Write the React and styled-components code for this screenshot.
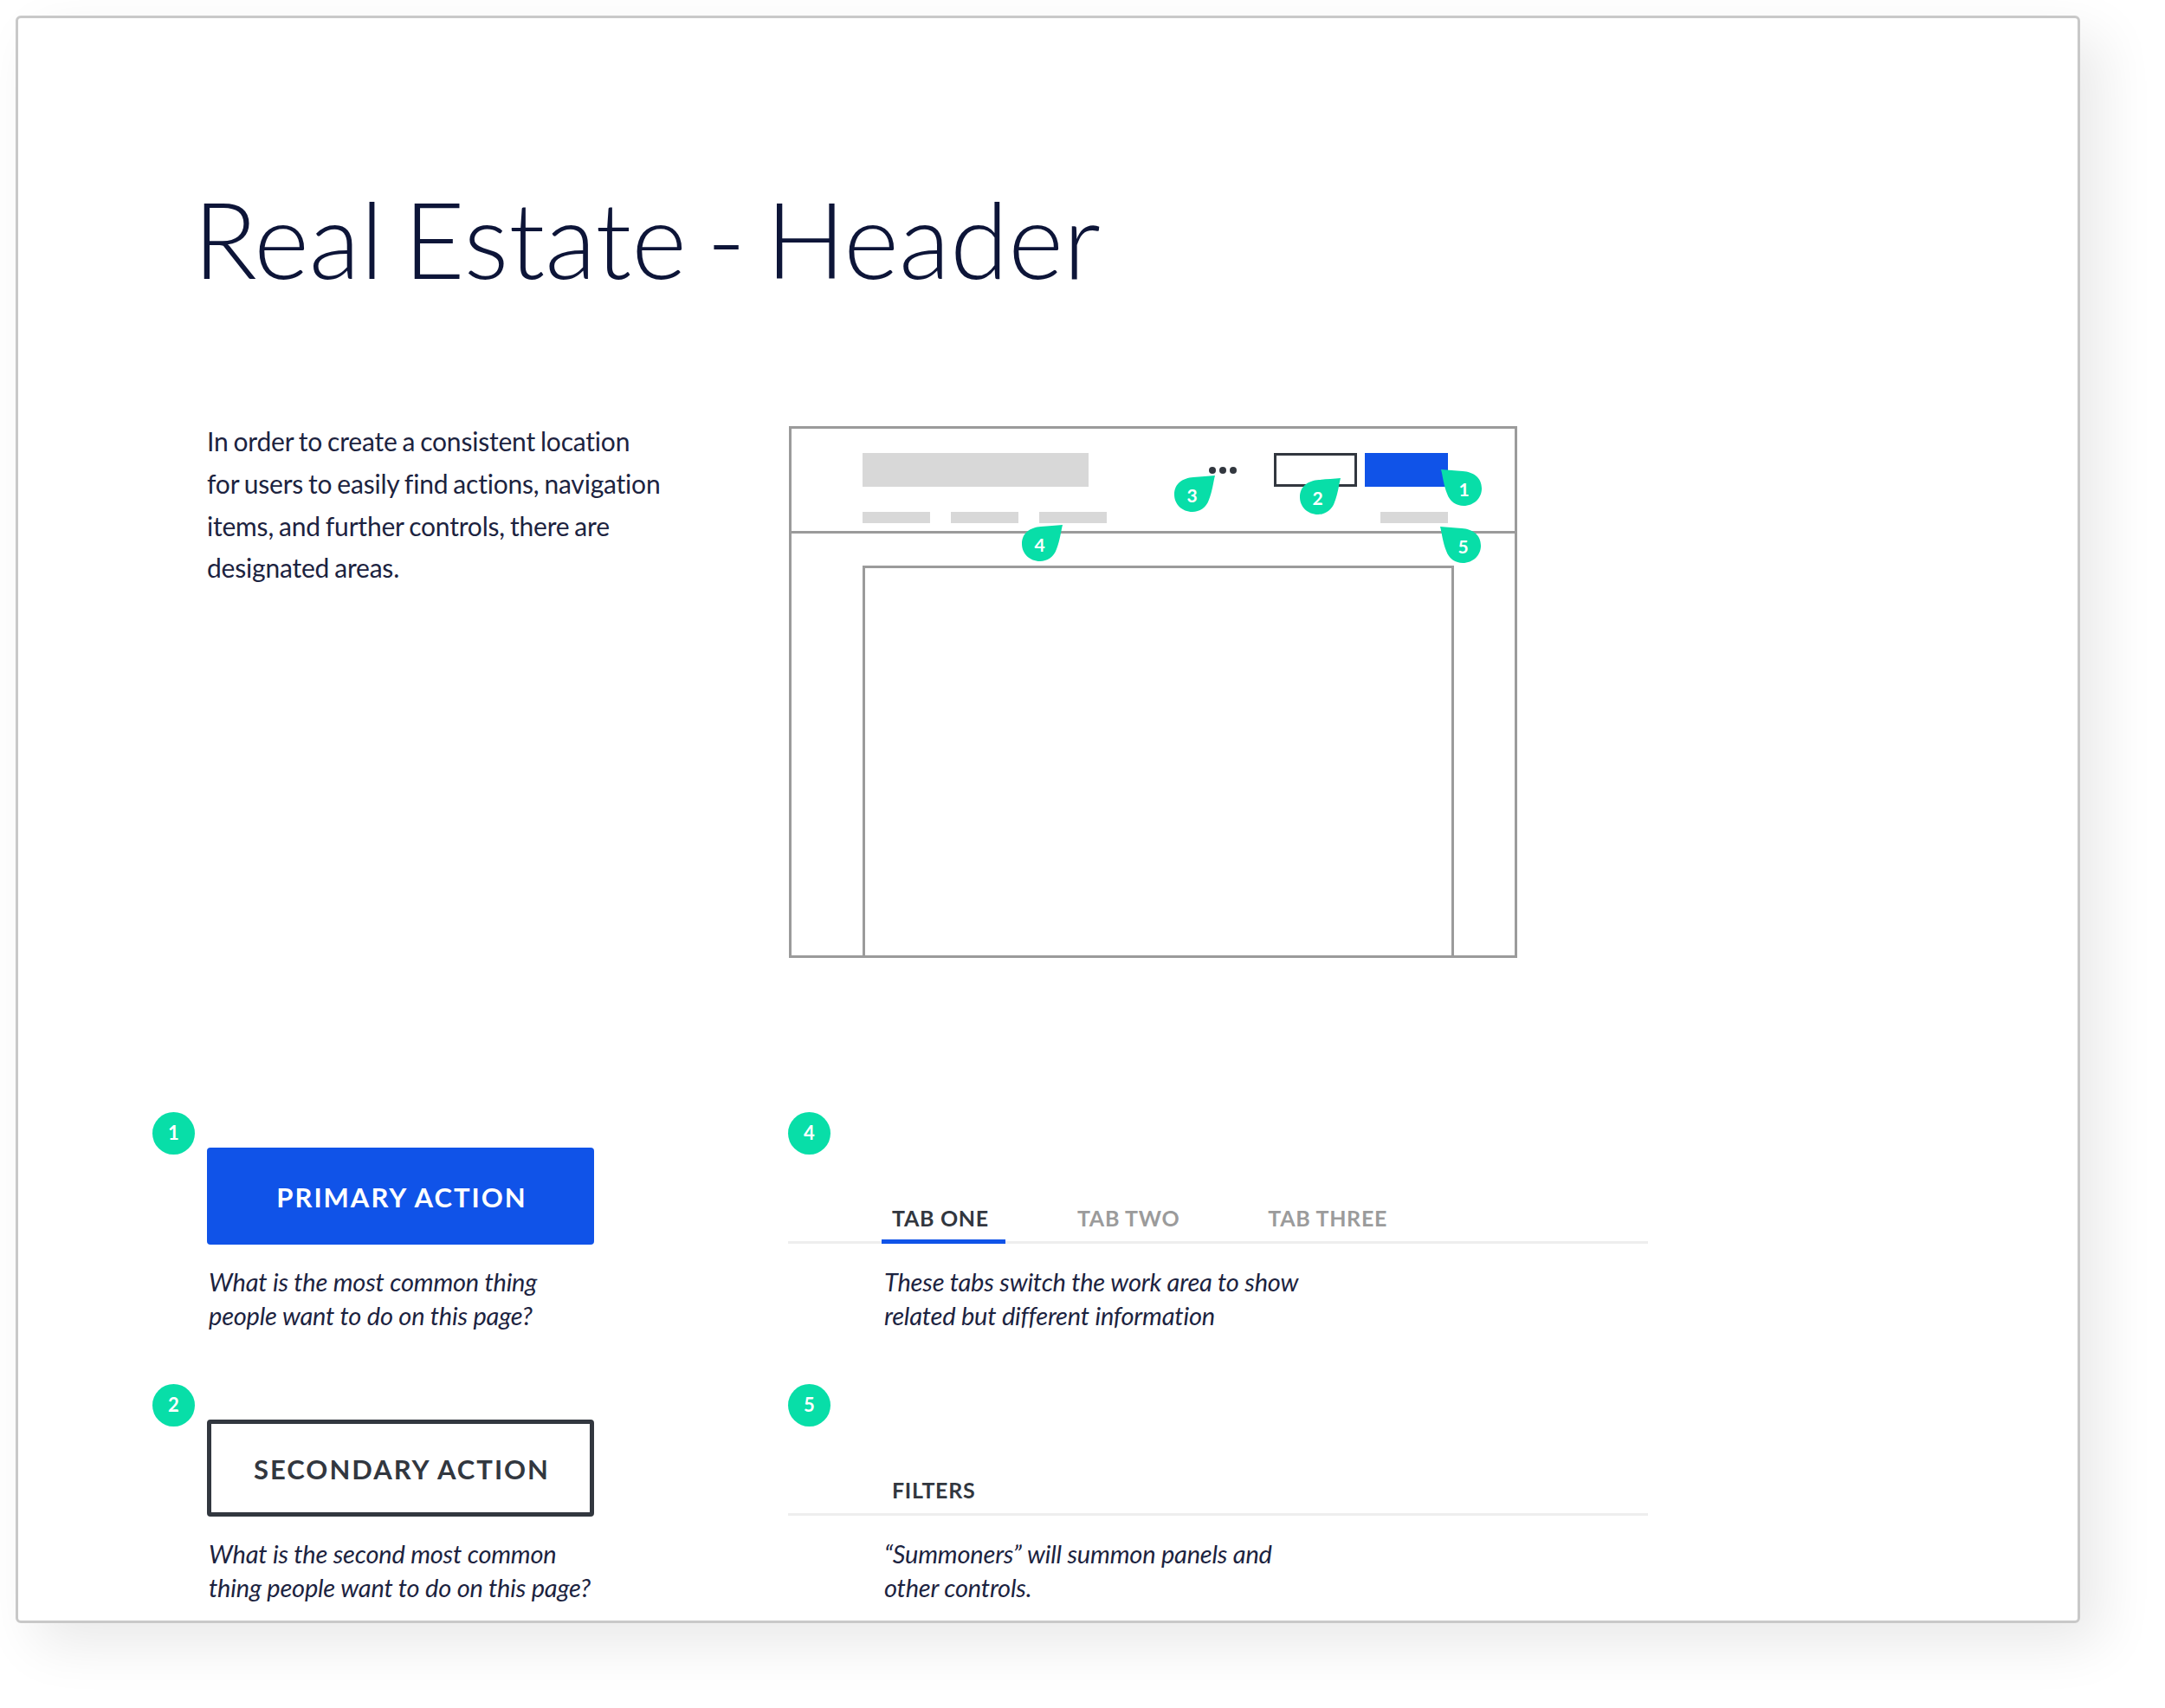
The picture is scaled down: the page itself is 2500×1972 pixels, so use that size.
import React from 'react';
import styled, { createGlobalStyle } from 'styled-components';

const GlobalStyle = createGlobalStyle`
  html, body {
    margin: 0;
    padding: 0;
    background: #fff;
  }
  body {
    font-family: Lato, "Liberation Sans", sans-serif;
    color: #1c2340;
  }
`;

const Page = styled.div`
  width: 2500px;
  height: 1972px;
  padding: 18px 98px 98px 18px;
  box-sizing: border-box;
  overflow: hidden;
`;

const Frame = styled.div`
  height: 100%;
  box-sizing: border-box;
  background: #fff;
  border: 3px solid #c8c8c8;
  border-radius: 6px;
  box-shadow: 24px 24px 64px rgba(0, 0, 0, 0.09);
  overflow: hidden;
`;

const Title = styled.h1`
  margin: 192px 0 0 202px;
  font-size: 122px;
  line-height: 124px;
  font-weight: 300;
  word-spacing: -10px;
  color: #0d1538;
`;

const Intro = styled.div`
  margin-top: 155px;
  padding-left: 218px;
  display: grid;
  grid-template-columns: 672px 841px;
`;

const IntroText = styled.p`
  margin: -7px 0 0;
  font-size: 30px;
  line-height: 48.8px;
  letter-spacing: -0.2px;
  word-spacing: -1.5px;
  color: #1c2340;
`;

const Wire = styled.div`
  position: relative;
  height: 614px;
  box-sizing: border-box;
  border: 3px solid #9b9b9b;
  display: flex;
  flex-direction: column;
`;

const WireHeader = styled.div`
  height: 121px;
  box-sizing: border-box;
  padding: 28px 77px 0 82px;
  border-bottom: 3px solid #9b9b9b;
`;

const WireTop = styled.div`
  display: flex;
  align-items: center;
`;

const WireLogo = styled.div`
  width: 261px;
  height: 39px;
  background: #d8d8d8;
`;

const WireDots = styled.div`
  display: flex;
  gap: 4px;
  margin-left: auto;
  margin-right: 43px;
`;

const WireDot = styled.span`
  width: 8px;
  height: 8px;
  border-radius: 50%;
  background: #32373f;
`;

const WireButton = styled.div`
  width: 96px;
  height: 39px;
  box-sizing: border-box;
  margin-left: ${(props) => (props.$primary ? '9px' : '0')};
  background: ${(props) => (props.$primary ? '#1053e8' : '#fff')};
  border: ${(props) => (props.$primary ? 'none' : '3px solid #32373f')};
`;

const WireBottom = styled.div`
  display: flex;
  gap: 24px;
  margin-top: 29px;
`;

const WireBar = styled.div`
  width: 78px;
  height: 13px;
  background: #d8d8d8;
  margin-left: ${(props) => (props.$right ? 'auto' : '0')};
`;

const WireBody = styled.div`
  flex: 1;
  display: flex;
  padding: 37px 0 0 82px;
`;

const WireContent = styled.div`
  width: 683px;
  box-sizing: border-box;
  border: 3px solid #9b9b9b;
  border-bottom: none;
`;

const PinBox = styled.div`
  position: absolute;
  left: ${(props) => props.$x}px;
  top: ${(props) => props.$y}px;
  width: 47px;
  height: 42px;
  display: flex;
  align-items: center;
  justify-content: center;

  svg {
    position: absolute;
    inset: 0;
    transform: ${(props) => (props.$flip ? 'scaleX(-1)' : 'none')};
  }
`;

const PinNumber = styled.span`
  position: relative;
  left: ${(props) => (props.$flip ? '3px' : '-3px')};
  top: 1px;
  color: #fff;
  font-size: 21px;
  font-weight: 700;
  line-height: 1;
`;

const Legend = styled.div`
  margin-top: 178px;
  padding-left: 155px;
  display: grid;
  grid-template-columns: 734px 993px;
  grid-auto-rows: 314px;
`;

const LegendItem = styled.div`
  display: flex;
  flex-direction: column;
  align-items: flex-start;
`;

const Badge = styled.div`
  width: 49px;
  height: 49px;
  flex: none;
  padding-bottom: 2px;
  box-sizing: border-box;
  border-radius: 50%;
  background: #08dea8;
  color: #fff;
  font-size: 22px;
  font-weight: 700;
  display: flex;
  align-items: center;
  justify-content: center;
`;

const ActionButton = styled.div`
  width: 447px;
  height: 112px;
  box-sizing: border-box;
  margin: -8px 0 0 63px;
  padding: 1px 0 0 3px;
  border-radius: 4px;
  display: flex;
  align-items: center;
  justify-content: center;
  font-size: 31px;
  font-weight: 700;
  letter-spacing: 2px;
  background: ${(props) => (props.$primary ? '#1053e8' : '#fff')};
  color: ${(props) => (props.$primary ? '#fff' : '#32373f')};
  border: ${(props) => (props.$primary ? 'none' : '5px solid #32373f')};
`;

const Note = styled.p`
  margin: 23px 0 0 ${(props) => props.$indent}px;
  font-size: 29px;
  line-height: 39px;
  font-style: italic;
  letter-spacing: -0.2px;
  color: #1c2340;
`;

const TabBar = styled.div`
  align-self: stretch;
  margin: 50px 0 1px;
  height: 53px;
  box-sizing: border-box;
  padding-left: 108px;
  border-bottom: 3px solid #eeeeee;
  display: flex;
  gap: 71px;
`;

const Tab = styled.div`
  height: 53px;
  box-sizing: border-box;
  padding: 8px 19px 0 12px;
  font-size: 25px;
  line-height: 30px;
  font-weight: 700;
  letter-spacing: 0.7px;
  color: ${(props) => (props.$active ? '#32373f' : '#9b9b9b')};
  border-bottom: 5px solid ${(props) => (props.$active ? '#1053e8' : 'transparent')};
`;

const SummonerTab = styled(Tab)`
  color: #32373f;
`;

const Pin = ({ n, x, y, flip }) => (
  <PinBox $x={x} $y={y} $flip={flip}>
    <svg width="47" height="42" viewBox="0 0 47 42">
      <path
        d="M47 0C45 8 44 18 40 28C37 37 29 42 21 42C9 42 0 33 0 22C0 9 10 3 22 2C31 1 39 1 47 0Z"
        fill="#08dea8"
      />
    </svg>
    <PinNumber $flip={flip}>{n}</PinNumber>
  </PinBox>
);

const App = () => {
  return (
    <Page>
      <GlobalStyle />
      <Frame>
        <Title>Real Estate - Header</Title>
        <Intro>
          <IntroText>
            In order to create a consistent location
            <br />
            for users to easily find actions, navigation
            <br />
            items, and further controls, there are
            <br />
            designated areas.
          </IntroText>
          <Wire>
            <WireHeader>
              <WireTop>
                <WireLogo />
                <WireDots>
                  <WireDot />
                  <WireDot />
                  <WireDot />
                </WireDots>
                <WireButton />
                <WireButton $primary />
              </WireTop>
              <WireBottom>
                <WireBar />
                <WireBar />
                <WireBar />
                <WireBar $right />
              </WireBottom>
            </WireHeader>
            <WireBody>
              <WireContent />
            </WireBody>
            <Pin n="1" x={750} y={47} flip />
            <Pin n="2" x={587} y={57} />
            <Pin n="3" x={442} y={54} />
            <Pin n="4" x={266} y={111} />
            <Pin n="5" x={749} y={113} flip />
          </Wire>
        </Intro>
        <Legend>
          <LegendItem>
            <Badge>1</Badge>
            <ActionButton $primary>PRIMARY ACTION</ActionButton>
            <Note $indent={65}>
              What is the most common thing
              <br />
              people want to do on this page?
            </Note>
          </LegendItem>
          <LegendItem>
            <Badge>4</Badge>
            <TabBar>
              <Tab $active>TAB ONE</Tab>
              <Tab>TAB TWO</Tab>
              <Tab>TAB THREE</Tab>
            </TabBar>
            <Note $indent={111}>
              These tabs switch the work area to show
              <br />
              related but different information
            </Note>
          </LegendItem>
          <LegendItem>
            <Badge>2</Badge>
            <ActionButton>SECONDARY ACTION</ActionButton>
            <Note $indent={65}>
              What is the second most common
              <br />
              thing people want to do on this page?
            </Note>
          </LegendItem>
          <LegendItem>
            <Badge>5</Badge>
            <TabBar>
              <SummonerTab>FILTERS</SummonerTab>
            </TabBar>
            <Note $indent={111}>
              “Summoners” will summon panels and
              <br />
              other controls.
            </Note>
          </LegendItem>
        </Legend>
      </Frame>
    </Page>
  );
};

export default App;
